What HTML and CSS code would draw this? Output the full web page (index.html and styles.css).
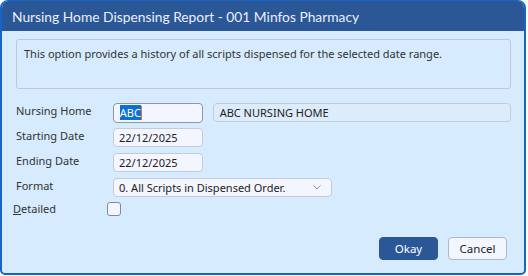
FILE: index.html
```html
<!DOCTYPE html>
<html lang="en">
<head>
    <meta charset="UTF-8">
    <title>Nursing Home Dispensing Report</title>
    <link rel="stylesheet" href="styles.css">
</head>
<body>
    <div class="window">
        <div class="title-bar">Nursing Home Dispensing Report - 001 Minfos Pharmacy</div>
        <div class="content">
            <div class="info-box">This option provides a history of all scripts dispensed for the selected date range.</div>

            <div class="form">
                <div class="row">
                    <label class="label">Nursing Home</label>
                    <div class="input short focused"><span class="selected">ABC</span><span class="caret"></span></div>
                    <div class="input long readonly">ABC NURSING HOME</div>
                </div>
                <div class="row">
                    <label class="label">Starting Date</label>
                    <div class="input short">22/12/2025</div>
                </div>
                <div class="row">
                    <label class="label">Ending Date</label>
                    <div class="input short">22/12/2025</div>
                </div>
                <div class="row">
                    <label class="label">Format</label>
                    <div class="input select">
                        <span>0. All Scripts in Dispensed Order.</span>
                        <svg class="chevron" width="8" height="5" viewBox="0 0 8 5"><path d="M0.5 0.5 L4 4 L7.5 0.5" fill="none" stroke="#8a8f98" stroke-width="1"/></svg>
                    </div>
                </div>
                <div class="row check-row">
                    <label class="label detailed"><u>D</u>etailed</label>
                    <div class="checkbox"></div>
                </div>
            </div>

            <div class="buttons">
                <button class="btn primary">Okay</button>
                <button class="btn">Cancel</button>
            </div>
        </div>
    </div>
</body>
</html>
```

FILE: styles.css
```css
* {
    margin: 0;
    padding: 0;
    box-sizing: border-box;
    font-family: 'Noto Sans', sans-serif;
}

body {
    background: #ffffff;
    width: 528px;
    height: 276px;
}

.window {
    width: 526px;
    height: 275px;
    border: 2px solid #1565c8;
    border-top-width: 1px;
    border-radius: 8px 8px 5px 5px;
    background: #d6ebfd;
    display: flex;
    flex-direction: column;
    overflow: hidden;
}

.title-bar {
    height: 30px;
    background: #2b5797;
    color: #e9f0fb;
    font-family: 'Lato', sans-serif;
    font-size: 13.8px;
    padding-left: 10px;
    display: flex;
    align-items: center;
    flex-shrink: 0;
}

.content {
    flex: 1;
    padding: 8px 13px 0 14px;
    display: flex;
    flex-direction: column;
}

.info-box {
    height: 50px;
    border: 1px solid #bfc7d0;
    border-radius: 3px;
    padding: 6px 7px;
    font-size: 11px;
    color: #333333;
}

.form {
    margin-top: 14px;
    display: flex;
    flex-direction: column;
    gap: 6px;
}

.row {
    display: flex;
    align-items: center;
    height: 19px;
}

.check-row {
    margin-top: -4px;
}

.label {
    width: 97px;
    font-size: 11px;
    color: #333333;
    margin-top: -4px;
}

.label.detailed {
    width: 94px;
    margin-left: -3px;
    margin-top: -1px;
}

.input {
    height: 19px;
    border: 1px solid #c3ccd6;
    border-radius: 4px;
    background: #f4f6ff;
    font-size: 11px;
    color: #222222;
    padding: 0 5px;
    display: flex;
    align-items: center;
}

.short {
    width: 90px;
}

.focused {
    height: 20px;
    border-color: #8e96a0;
    padding-left: 6px;
}

.selected {
    background: #0a6fd8;
    color: #ffffff;
}

.caret {
    width: 1px;
    height: 14px;
    background: #e07a1a;
}

.long {
    width: 299px;
    margin-left: 10px;
    background: #dcecfb;
    padding-left: 6px;
}

.select {
    width: 219px;
    justify-content: space-between;
    padding-right: 10px;
}

.chevron {
    display: block;
}

.checkbox {
    width: 14px;
    height: 14px;
    border: 1px solid #7f8a96;
    border-radius: 3px;
    background: #f4f6ff;
}

.buttons {
    margin-top: auto;
    margin-bottom: 13px;
    display: flex;
    justify-content: flex-end;
    gap: 10px;
    padding-right: 4px;
}

.btn {
    width: 59px;
    height: 23px;
    border: 1px solid #a9b9cc;
    border-radius: 4px;
    background: #f4f6ff;
    color: #222222;
    font-size: 11.5px;
}

.primary {
    background: #2b5797;
    border-color: #2b5797;
    color: #ffffff;
}
```
